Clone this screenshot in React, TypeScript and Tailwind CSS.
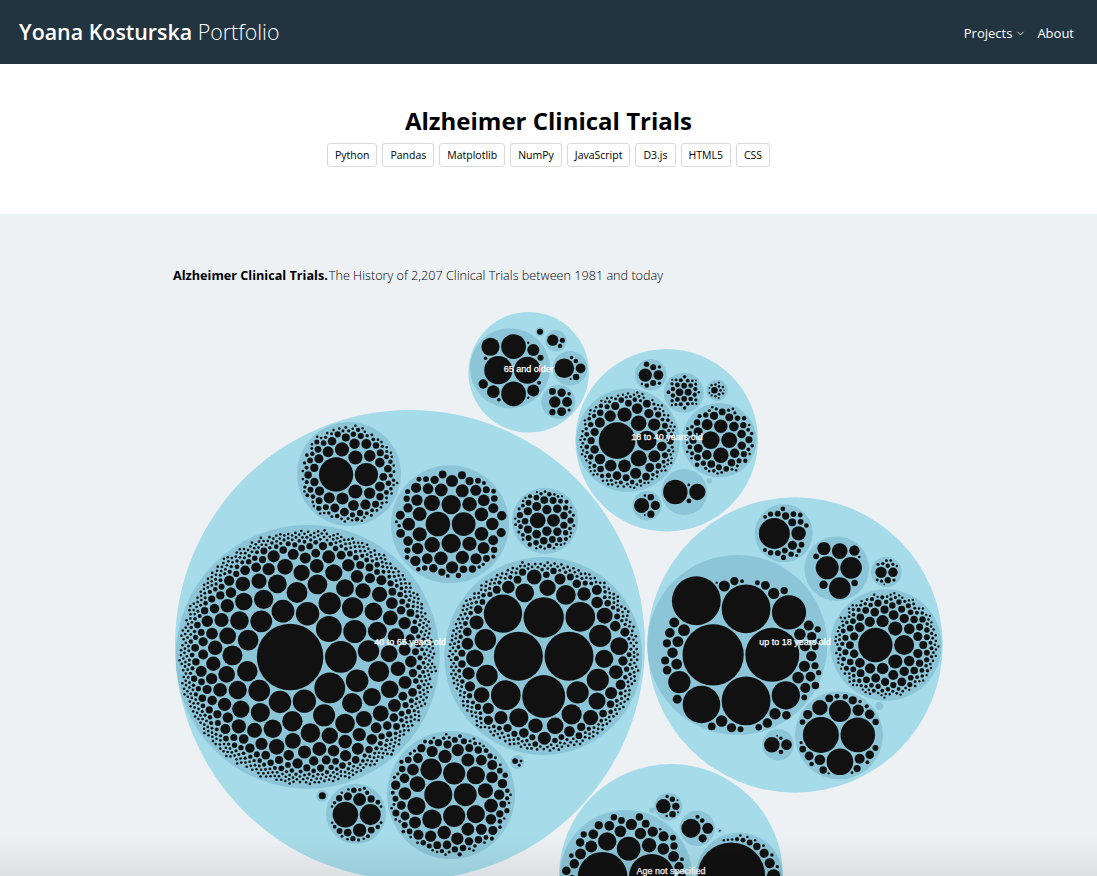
import { useMemo } from "react";
import { ChevronDown } from "lucide-react";

const tags = ["Python", "Pandas", "Matplotlib", "NumPy", "JavaScript", "D3.js", "HTML5", "CSS"];

type Circle = { x: number; y: number; r: number };
type Cluster = {
  x: number;
  y: number;
  r: number;
  big: number[];
  tail?: [number, number, number];
  nudge?: [number, number];
};

const GAP = 0.8;

// same front-chain packing d3.pack uses
function place(b: Circle, a: Circle, c: Circle) {
  const dx = b.x - a.x;
  const dy = b.y - a.y;
  const d2 = dx * dx + dy * dy;
  if (d2) {
    let a2 = a.r + c.r;
    a2 *= a2;
    let b2 = b.r + c.r;
    b2 *= b2;
    if (a2 > b2) {
      const x = (d2 + b2 - a2) / (2 * d2);
      const y = Math.sqrt(Math.max(0, b2 / d2 - x * x));
      c.x = b.x - x * dx - y * dy;
      c.y = b.y - x * dy + y * dx;
    } else {
      const x = (d2 + a2 - b2) / (2 * d2);
      const y = Math.sqrt(Math.max(0, a2 / d2 - x * x));
      c.x = a.x + x * dx - y * dy;
      c.y = a.y + x * dy + y * dx;
    }
  } else {
    c.x = a.x + c.r;
    c.y = a.y;
  }
}

function hits(a: Circle, b: Circle) {
  const dr = a.r + b.r - 1e-6;
  const dx = b.x - a.x;
  const dy = b.y - a.y;
  return dr > 0 && dr * dr > dx * dx + dy * dy;
}

type Link = { c: Circle; next: Link; prev: Link };

function score(n: Link) {
  const a = n.c;
  const b = n.next.c;
  const ab = a.r + b.r;
  const dx = (a.x * b.r + b.x * a.r) / ab;
  const dy = (a.y * b.r + b.y * a.r) / ab;
  return dx * dx + dy * dy;
}

function packSiblings(list: Circle[]) {
  const n = list.length;
  if (n === 0) return;
  list[0].x = 0;
  list[0].y = 0;
  if (n === 1) return;
  list[0].x = -list[1].r;
  list[1].x = list[0].r;
  list[1].y = 0;
  if (n === 2) return;
  place(list[1], list[0], list[2]);
  let a = { c: list[0] } as Link;
  let b = { c: list[1] } as Link;
  const third = { c: list[2] } as Link;
  a.next = third.prev = b;
  b.next = a.prev = third;
  third.next = b.prev = a;

  pack: for (let i = 3; i < n; ++i) {
    place(a.c, b.c, list[i]);
    let c = { c: list[i] } as Link;
    let j = b.next;
    let k = a.prev;
    let sj = b.c.r;
    let sk = a.c.r;
    do {
      if (sj <= sk) {
        if (hits(j.c, c.c)) {
          b = j;
          a.next = b;
          b.prev = a;
          --i;
          continue pack;
        }
        sj += j.c.r;
        j = j.next;
      } else {
        if (hits(k.c, c.c)) {
          a = k;
          a.next = b;
          b.prev = a;
          --i;
          continue pack;
        }
        sk += k.c.r;
        k = k.prev;
      }
    } while (j !== k.next);
    c.prev = a;
    c.next = b;
    a.next = b.prev = b = c;
    let aa = score(a);
    while ((c = c.next) !== b) {
      const ca = score(c);
      if (ca < aa) {
        a = c;
        aa = ca;
      }
    }
    b = a.next;
  }
}

// rough smallest enclosing circle, good enough to centre a cluster
function enclose(list: Circle[]) {
  let x = list[0].x;
  let y = list[0].y;
  for (let i = 1; i < 1500; i++) {
    let far = list[0];
    let best = -1;
    for (const c of list) {
      const d = Math.hypot(c.x - x, c.y - y) + c.r;
      if (d > best) {
        best = d;
        far = c;
      }
    }
    const d = Math.hypot(far.x - x, far.y - y) || 1;
    const px = far.x + ((far.x - x) / d) * far.r;
    const py = far.y + ((far.y - y) / d) * far.r;
    x += (px - x) / (i + 1);
    y += (py - y) / (i + 1);
  }
  let r = 0;
  for (const c of list) r = Math.max(r, Math.hypot(c.x - x, c.y - y) + c.r);
  return { x, y, r };
}

// tail of small dots, exponent chosen so the cluster ends up about the right size
function tailRadii(R: number, big: number[], n: number, from: number, to: number) {
  const want = 0.8 * R * R - big.reduce((s, r) => s + (r + GAP) * (r + GAP), 0);
  let bestP = 1;
  let bestErr = Infinity;
  for (let p = 0.5; p < 20; p += 0.25) {
    let sum = 0;
    for (let i = 0; i < n; i++) {
      const r = to + (from - to) * Math.pow(1 - i / Math.max(1, n - 1), p);
      sum += (r + GAP) * (r + GAP);
    }
    if (Math.abs(sum - want) < bestErr) {
      bestErr = Math.abs(sum - want);
      bestP = p;
    }
  }
  const out: number[] = [];
  for (let i = 0; i < n; i++) out.push(to + (from - to) * Math.pow(1 - i / Math.max(1, n - 1), bestP));
  return out;
}

function leaves(cl: Cluster) {
  const radii = [...cl.big];
  if (cl.tail) radii.push(...tailRadii(cl.r, cl.big, cl.tail[0], cl.tail[1], cl.tail[2]));
  if (!radii.length) return [];
  radii.sort((a, b) => b - a);
  const list: Circle[] = radii.map((r) => ({ x: 0, y: 0, r: r + GAP }));
  packSiblings(list);
  const e = enclose(list);
  const s = (cl.r - 1) / e.r;
  const [nx, ny] = cl.nudge ?? [0, 0];
  return list.map((c) => ({
    x: cl.x + nx + (c.x - e.x) * s,
    y: cl.y + ny + (c.y - e.y) * s,
    r: Math.max(0.5, (c.r - GAP) * s),
  }));
}

const groups: { x: number; y: number; r: number; clusters: Cluster[] }[] = [
  {
    x: 410, y: 645, r: 235,
    clusters: [
      { x: 307.7, y: 656.7, r: 132, big: [33.5, 16, 15.5, 13], tail: [700, 11.8, 1.3] },
      { x: 543.3, y: 656, r: 99, big: [24.3, 24.3, 21.3, 20, 19, 14.7, 14.7, 11, 11, 11, 10.7, 10.7], tail: [340, 10, 1.3] },
      { x: 349, y: 474, r: 52, big: [17.7, 12, 7.3, 7.3, 7.3, 6.3], tail: [110, 6, 1.3] },
      { x: 450, y: 524.3, r: 59, big: [12.7, 12.3, 10, 10, 8.3, 8], tail: [62, 7.5, 1.6] },
      { x: 545, y: 520.7, r: 33, big: [8.3, 6.7], tail: [62, 5, 1.2] },
      { x: 451, y: 795, r: 64, big: [14.3, 11.7, 11.3, 11.3, 11, 10, 9.3, 9.3, 9.3, 8, 7.7], tail: [100, 7, 1.3] },
      { x: 356, y: 813.7, r: 30, big: [13.3, 11, 7, 6.7, 4.3], tail: [25, 4, 1.3] },
      { x: 517.3, y: 762, r: 7, big: [3, 1.5, 1.5] },
      { x: 322.3, y: 795.7, r: 6, big: [2] },
    ],
  },
  {
    x: 528.7, y: 372.3, r: 60.3,
    clusters: [
      { x: 510, y: 368.3, r: 40, big: [14, 13.3, 12.3, 12.3, 9, 6.3, 6, 6, 4.7, 3, 2, 1.8, 1.8, 1.2, 1.2] },
      { x: 558.3, y: 401.7, r: 17, big: [5.5, 4.8, 4.3, 4, 3.3, 3, 1.7, 1.5] },
      { x: 570, y: 368.3, r: 17.3, big: [10, 5, 3.3, 2.3, 1.7, 1] },
      { x: 556, y: 340.7, r: 10.7, big: [6, 2.7, 2.4] },
      { x: 540, y: 331.7, r: 4.7, big: [3.7] },
    ],
  },
  {
    x: 666.7, y: 440.3, r: 91.3,
    clusters: [
      { x: 628, y: 440.3, r: 51.7, big: [18.7, 10, 8.3, 8, 7.3], tail: [135, 6.5, 1.2] },
      { x: 719.3, y: 440.3, r: 37.3, big: [9.3, 8.3, 8, 7, 5.7, 5], tail: [56, 5, 1.3] },
      { x: 684.3, y: 492, r: 23, big: [12, 8, 2.4, 1.3] },
      { x: 647, y: 505.7, r: 14.7, big: [7.7, 4.7, 3.7, 3.3, 1.3, 1] },
      { x: 650.7, y: 374.7, r: 15.7, big: [6.7, 5, 3, 3, 2.7, 2.3, 1.7, 1.7, 1.2] },
      { x: 683.7, y: 392.7, r: 20, big: [4.3, 4, 3.3, 3.3], tail: [28, 2.8, 1] },
      { x: 717, y: 390.3, r: 10.7, big: [3.7], tail: [14, 1.6, 0.8] },
      { x: 709.3, y: 481, r: 2.7, big: [] },
    ],
  },
  {
    x: 795, y: 645, r: 147.7,
    clusters: [
      { x: 737.3, y: 645, r: 90, big: [31, 27.3, 24.7, 24.7, 24.7, 19, 17.3, 14.3, 11.3], tail: [42, 6, 1.2], nudge: [3, 2] },
      { x: 886, y: 645, r: 55.7, big: [17.7, 10.3, 7.3, 7.3, 6.3, 6], tail: [170, 5.5, 1.2] },
      { x: 839, y: 735.3, r: 44, big: [18, 17.3, 13.3, 11, 7.7, 5.7, 5.3], tail: [22, 5, 1.2] },
      { x: 783.7, y: 533.3, r: 29, big: [15.7, 7.3, 4.7, 4, 3.7, 3, 3, 2.7], tail: [14, 3, 1.5] },
      { x: 836.7, y: 568.7, r: 32.3, big: [11.7, 11, 11, 8, 6.7, 5.3, 4.3, 3.3, 3, 1.3] },
      { x: 886.3, y: 572, r: 15.3, big: [6, 5, 3.3, 2.3], tail: [10, 1.8, 1] },
      { x: 778, y: 744.7, r: 15.7, big: [7.7, 5.3, 2.3, 1.7, 1] },
      { x: 879.3, y: 706, r: 4, big: [] },
    ],
  },
  {
    x: 671, y: 876, r: 112,
    clusters: [
      { x: 626, y: 876, r: 66, big: [25, 23, 12.3, 12, 9.3, 7.7, 7.3, 7.3, 7], tail: [50, 6, 1.2] },
      { x: 739.2, y: 876, r: 43.5, big: [33, 6.7, 6.3], tail: [30, 5, 1.2] },
      { x: 697.3, y: 828.3, r: 17.7, big: [9.3, 5.3, 4, 2.3, 2] },
      { x: 668.3, y: 806.7, r: 14, big: [7.3, 3.7, 3.3, 2.7, 1.7, 1.3, 1, 1] },
      { x: 719.7, y: 830.7, r: 2.3, big: [1.5] },
      { x: 652, y: 810.3, r: 2.7, big: [] },
    ],
  },
];

const labels = [
  { x: 410, y: 642.5, text: "40 to 65 years old" },
  { x: 528.7, y: 369.5, text: "65 and older" },
  { x: 667, y: 437.5, text: "18 to 40 years old" },
  { x: 795, y: 642.5, text: "up to 18 years old" },
  { x: 671, y: 872, text: "Age not specified" },
];

function BubbleChart() {
  const drawn = useMemo(
    () => groups.map((g) => ({ ...g, clusters: g.clusters.map((c) => ({ ...c, dots: leaves(c) })) })),
    []
  );
  return (
    <svg className="block h-[576px] w-[1097px]" viewBox="0 300 1097 576">
      {drawn.map((g, i) => (
        <g key={i}>
          <circle cx={g.x} cy={g.y} r={g.r} fill="#a6dce9" />
          {g.clusters.map((c, j) => (
            <g key={j}>
              <circle cx={c.x} cy={c.y} r={c.r} fill="#8bc5d7" />
              {c.dots.map((d, k) => (
                <circle key={k} cx={d.x} cy={d.y} r={d.r} fill="#111111" />
              ))}
            </g>
          ))}
        </g>
      ))}
      {labels.map((l) => (
        <text
          key={l.text}
          x={l.x}
          y={l.y}
          textAnchor="middle"
          dominantBaseline="middle"
          fill="#ffffff"
          stroke="#ffffff"
          strokeWidth={0.25}
          className="text-[9px] font-['Liberation_Sans',sans-serif]"
        >
          {l.text}
        </text>
      ))}
    </svg>
  );
}

export default function App() {
  return (
    <main className="relative flex h-screen flex-col overflow-hidden bg-[#edf1f4] font-['Open_Sans',sans-serif] text-black">
      {/* Navbar */}
      <nav className="flex h-16 shrink-0 items-center justify-between bg-[#22343f] pl-[19px] pr-[23px] text-white">
        <div className="text-[21.4px] font-light leading-none">
          <span className="font-semibold">Yoana Kosturska</span> Portfolio
        </div>
        <div className="flex items-center gap-[11px] pt-[3px] text-[13px] font-normal">
          <span className="flex items-center gap-[3px]">
            Projects <ChevronDown size={11} strokeWidth={1.75} />
          </span>
          <span>About</span>
        </div>
      </nav>

      {/* Title */}
      <header className="flex h-[150px] shrink-0 flex-col items-center bg-white pt-[41px]">
        <h1 className="text-2xl font-bold leading-8">Alzheimer Clinical Trials</h1>
        <div className="mt-[6px] flex gap-[5px]">
          {tags.map((t) => (
            <span key={t} className="flex h-6 items-center rounded-[3px] border border-[#d9d9d9] px-[7px] pt-px text-[10.5px]">
              {t}
            </span>
          ))}
        </div>
      </header>

      {/* Chart */}
      <section className="flex-1">
        <p className="pl-[173px] pt-[51px] text-[12.65px] leading-5 font-light">
          <span className="mr-px font-bold">Alzheimer Clinical Trials.</span>The History of 2,207 Clinical Trials between 1981 and today
        </p>
        <div className="mt-[15px]">
          <BubbleChart />
        </div>
      </section>

      <div className="pointer-events-none absolute inset-x-0 bottom-0 h-10 bg-gradient-to-t from-black/[.07] to-transparent" />
    </main>
  );
}
